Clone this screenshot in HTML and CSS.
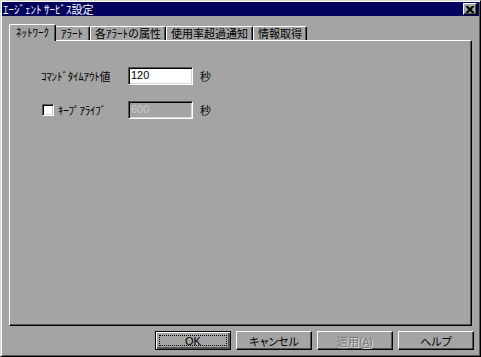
FILE: index.html
```html
<!DOCTYPE html>
<html lang="ja">
<head>
    <meta charset="UTF-8">
    <title>エージェント サービス設定</title>
    <link rel="stylesheet" href="styles.css">
</head>
<body>
    <div class="window">
        <!-- title bar -->
        <div class="titlebar">
            <span class="title">ｴｰｼﾞｪﾝﾄ ｻｰﾋﾞｽ設定</span>
            <div class="close-btn">
                <svg width="8" height="7" viewBox="0 0 8 7">
                    <path d="M0 0h2l2 2 2-2h2v1l-2.5 2.5 2.5 2.5v1h-2l-2-2-2 2h-2v-1l2.5-2.5-2.5-2.5z" fill="#000"/>
                </svg>
            </div>
        </div>

        <!-- tabs -->
        <div class="tabs">
            <div class="tab active">ﾈｯﾄﾜｰｸ</div>
            <div class="tab wide">ｱﾗｰﾄ</div>
            <div class="tab">各ｱﾗｰﾄの属性</div>
            <div class="tab">使用率超過通知</div>
            <div class="tab">情報取得</div>
        </div>

        <div class="panel">
            <div class="form">
                <span class="field-label">ｺﾏﾝﾄﾞﾀｲﾑｱｳﾄ値</span>
                <div class="textbox">120</div>
                <span class="unit">秒</span>

                <span class="field-label check"><span class="checkbox"></span>ｷｰﾌﾟｱﾗｲﾌﾞ</span>
                <div class="textbox disabled">600</div>
                <span class="unit">秒</span>
            </div>
        </div>

        <!-- dialog buttons -->
        <div class="buttons">
            <div class="btn default"><span class="focus">OK</span></div>
            <div class="btn">キャンセル</div>
            <div class="btn disabled">適用(<u>A</u>)</div>
            <div class="btn">ヘルプ</div>
        </div>
    </div>
</body>
</html>
```

FILE: styles.css
```css
body {
    margin: 0;
    padding: 0;
    background-color: #a4a4a4;
    font-family: "Noto Sans CJK JP", "Liberation Sans", sans-serif;
    font-size: 11px;
    color: #000;
}

.window {
    width: 481px;
    height: 357px;
    box-sizing: border-box;
    display: flex;
    flex-direction: column;
    background-color: #a4a4a4;
    border: 1px solid;
    border-color: #d8d8d8 #000 #000 #d8d8d8;
    padding: 1px;
    box-shadow: inset 1px 1px #fff, inset -1px -1px #555;
}

.titlebar {
    height: 14px;
    display: flex;
    align-items: center;
    justify-content: space-between;
    background-color: #03035e;
    color: #fff;
    padding: 0 2px 0 1px;
}

.title {
    line-height: 14px;
}

.close-btn {
    width: 14px;
    height: 12px;
    box-sizing: border-box;
    display: flex;
    align-items: center;
    justify-content: center;
    background-color: #a4a4a4;
    border: 1px solid;
    border-color: #fff #000 #000 #fff;
    box-shadow: inset -1px -1px #555;
}

.tabs {
    display: flex;
    align-items: flex-end;
    margin-top: 8px;
    padding-left: 9px;
}

.tab {
    height: 14px;
    line-height: 13px;
    padding: 0 4px;
    box-sizing: border-box;
    border: 1px solid;
    border-bottom: none;
    border-color: #fff #000 #000 #fff;
    border-radius: 2px 2px 0 0;
    box-shadow: inset -1px 0 #555;
    white-space: nowrap;
}

.tab.wide {
    padding: 0 6px;
}

.tab.active {
    position: relative;
    z-index: 1;
    height: 17px;
    line-height: 15px;
    margin: 0 -2px -1px -2px;
    padding: 0 6px;
    background-color: #a4a4a4;
}

.panel {
    flex: 1;
    margin: 0 7px;
    border: 1px solid;
    border-color: #fff #000 #000 #fff;
    box-shadow: inset -1px -1px #555;
    padding: 26px 0 0 31px;
}

.form {
    display: grid;
    grid-template-columns: 87px 65px auto;
    row-gap: 16px;
    align-items: center;
}

.field-label {
    display: flex;
    align-items: center;
    letter-spacing: -0.2px;
}

.field-label.check {
    margin-left: 1px;
}

.checkbox {
    width: 12px;
    height: 12px;
    box-sizing: border-box;
    margin-right: 4px;
    background-color: #fff;
    border: 1px solid;
    border-color: #555 #fff #fff #555;
    box-shadow: inset 1px 1px #000, inset -1px -1px #d8d8d8;
}

.textbox {
    height: 18px;
    box-sizing: border-box;
    padding: 0 2px;
    line-height: 15px;
    background-color: #fff;
    border: 1px solid;
    border-color: #555 #fff #fff #555;
    box-shadow: inset 1px 1px #000, inset -1px -1px #d8d8d8;
    font-family: "Liberation Sans", sans-serif;
}

.textbox.disabled {
    background-color: #a4a4a4;
    color: #c8c8c8;
}

.unit {
    margin-left: 7px;
}

.buttons {
    display: flex;
    justify-content: flex-end;
    gap: 5px;
    margin: 5px 5px 5px 0;
}

.btn {
    width: 76px;
    height: 19px;
    box-sizing: border-box;
    display: flex;
    align-items: center;
    justify-content: center;
    border: 1px solid;
    border-color: #fff #000 #000 #fff;
    box-shadow: inset -1px -1px #555;
    font-feature-settings: "palt";
}

.btn.default {
    border: 1px solid #000;
    box-shadow: inset 1px 1px #fff, inset -2px -2px #555, inset -1px -1px #000;
    padding: 3px;
}

.btn .focus {
    flex: 1;
    align-self: stretch;
    display: flex;
    align-items: center;
    justify-content: center;
    border: 1px dotted #000;
    font-family: "Liberation Sans", sans-serif;
}

.btn.disabled {
    color: #777;
    text-shadow: 1px 1px #e0e0e0;
}
```
